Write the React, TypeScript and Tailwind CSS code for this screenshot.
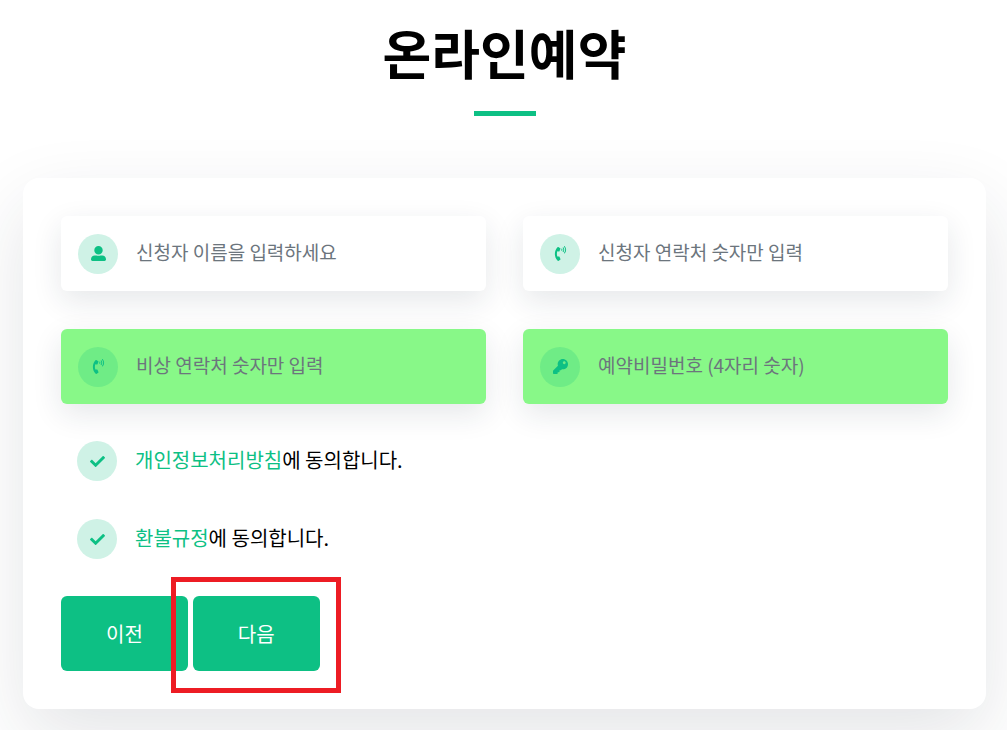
import React from 'react';
import type { IconType } from 'react-icons';
import { FaCheck, FaKey, FaPhoneVolume, FaUserAlt } from 'react-icons/fa';

// Interface for a text field of the form
interface Field {
  id: string;
  type: string;
  placeholder: string;
  icon: IconType;
  highlighted?: boolean;
}

// Interface for an agreement row
interface Agreement {
  id: string;
  linkText: string;
  rest: string;
}

const fields: Field[] = [
  { id: 'name', type: 'text', placeholder: '신청자 이름을 입력하세요', icon: FaUserAlt },
  { id: 'phone', type: 'tel', placeholder: '신청자 연락처 숫자만 입력', icon: FaPhoneVolume },
  { id: 'emergency', type: 'tel', placeholder: '비상 연락처 숫자만 입력', icon: FaPhoneVolume, highlighted: true },
  { id: 'password', type: 'password', placeholder: '예약비밀번호 (4자리 숫자)', icon: FaKey, highlighted: true }
];

const agreements: Agreement[] = [
  { id: 'privacy', linkText: '개인정보처리방침', rest: '에 동의합니다.' },
  { id: 'refund', linkText: '환불규정', rest: '에 동의합니다.' }
];

const TextField: React.FC<{ field: Field }> = ({ field }) => {
  const Icon = field.icon;
  return (
    <div
      className={`flex h-[75px] items-center gap-[18px] rounded-md px-[17px] shadow-[0_10px_30px_rgba(31,45,61,0.11)] ${
        field.highlighted ? 'bg-[#88f888]' : 'bg-white'
      }`}
    >
      <label
        htmlFor={field.id}
        aria-label={field.placeholder}
        className="flex size-10 shrink-0 items-center justify-center rounded-full bg-[#0dc084]/20 text-[#0dc084]"
      >
        <Icon className="size-[15px]" />
      </label>
      <input
        id={field.id}
        type={field.type}
        placeholder={field.placeholder}
        className="w-full min-w-0 bg-transparent pb-0.5 text-[19px] outline-none placeholder:text-[#6c757d]"
      />
    </div>
  );
};

const AgreementRow: React.FC<{ agreement: Agreement }> = ({ agreement }) => {
  return (
    <div className="flex items-center gap-[18px] px-4">
      <div className="relative size-10 shrink-0">
        <input
          id={agreement.id}
          type="checkbox"
          defaultChecked
          className="block size-10 appearance-none rounded-full bg-[#0dc084]/20"
        />
        <FaCheck className="pointer-events-none absolute inset-0 m-auto size-[15px] text-[#0dc084]" />
      </div>
      <label htmlFor={agreement.id} className="pb-0.5 text-xl text-black">
        <a href="#" className="text-[#0dc084]">{agreement.linkText}</a>
        {agreement.rest}
      </label>
    </div>
  );
};

const App: React.FC = () => {
  return (
    <main className="overflow-hidden bg-white pr-[21px] pb-[21px] pl-[23px] font-['Noto_Sans_CJK_KR',sans-serif]">
      <header className="flex flex-col items-center pt-4 pb-[62px]">
        <h1 className="text-[53px] leading-[72px] font-bold text-black">온라인예약</h1>
        <div className="mt-[23px] h-[5px] w-[62px] bg-[#0dc084]"></div>
      </header>

      <form className="rounded-2xl bg-white p-[38px] shadow-[0_28px_75px_rgba(31,45,61,0.12)]">
        {/* Text fields */}
        <div className="grid grid-cols-2 gap-x-[37px] gap-y-[38px]">
          {fields.map(field => (
            <TextField key={field.id} field={field} />
          ))}
        </div>

        {/* Agreements */}
        <div className="my-[37px] flex flex-col gap-[38px]">
          {agreements.map(agreement => (
            <AgreementRow key={agreement.id} agreement={agreement} />
          ))}
        </div>

        {/* Buttons */}
        <div className="flex gap-[5px]">
          <button type="button" className="h-[75px] rounded-md bg-[#0dc084] px-[45px] text-xl text-white">
            이전
          </button>
          <div className="relative">
            <button type="submit" className="h-[75px] rounded-md bg-[#0dc084] px-[45px] text-xl text-white">
              다음
            </button>
            <div className="pointer-events-none absolute -top-[19px] -right-[21px] -bottom-[22px] -left-[22px] border-[5px] border-[#ed1c24]"></div>
          </div>
        </div>
      </form>
    </main>
  );
};

export default App;
